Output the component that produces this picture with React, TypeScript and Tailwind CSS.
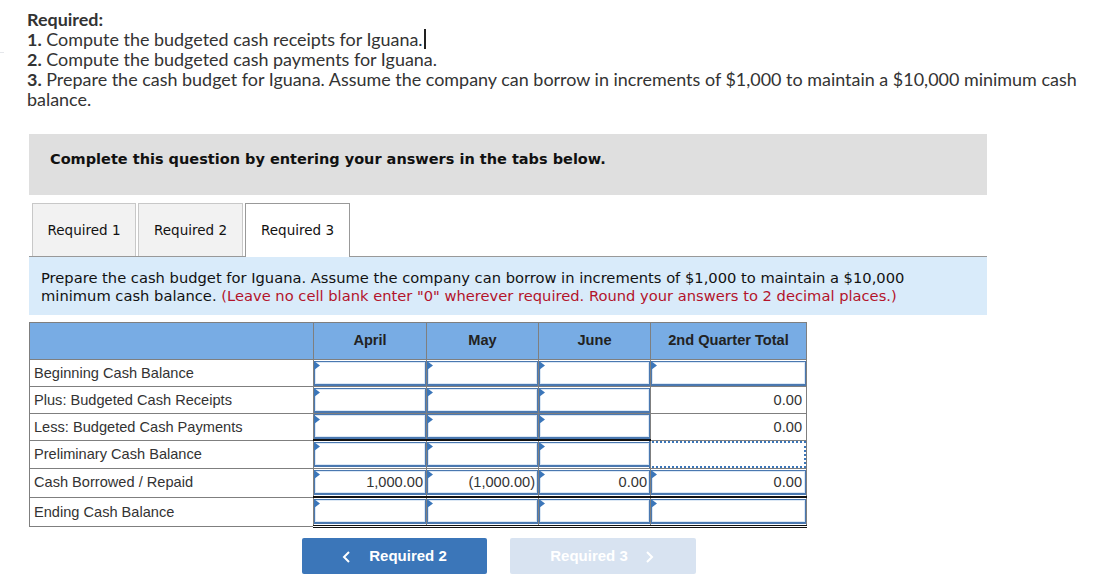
import React from "react";

const Cell = ({ v, bottom = "", dotted = false, plain = false, last = false }: { v?: string; bottom?: string; dotted?: boolean; plain?: boolean; last?: boolean }) => {
  if (plain) {
    return (
      <td className="border border-[#7f7f7f] p-0 text-right align-middle">
        <div className="pr-[4px] leading-[18px] text-[#333]">{v}</div>
      </td>
    );
  }
  if (dotted) {
    return (
      <td className="border border-[#7f7f7f] p-0">
        <div className="-ml-[2px] h-[27px] border-2 border-dotted border-[#3b76b9] bg-white" />
      </td>
    );
  }
  return (
    <td className={`relative border border-[#7f7f7f] p-0 ${bottom}`}>
      <div className={`flex h-full min-h-[25px] items-center justify-end border border-b-2 border-[#4a78b0] bg-white leading-[18px] text-[#333] shadow-[inset_0_0_0_1px_#dce8f5] ${last ? "pr-[3px]" : "pr-[2px]"}`}>
        {v}
      </div>
      <svg className="absolute left-0 top-[1px]" width="7" height="9" viewBox="0 0 7 9">
        <path d="M0 0 L6 4.5 L0 9 Z" fill="#3b76b9" />
      </svg>
    </td>
  );
};

const rows: { label: string; h: string; pad?: string; vals: (string | undefined)[]; last: "input" | "plain" | "dotted"; bottom?: string }[] = [
  { label: "Beginning Cash Balance", h: "h-[27px]", vals: [undefined, undefined, undefined, undefined], last: "input" },
  { label: "Plus: Budgeted Cash Receipts", h: "h-[27px]", vals: [undefined, undefined, undefined, "0.00"], last: "plain" },
  { label: "Less: Budgeted Cash Payments", h: "h-[26px]", vals: [undefined, undefined, undefined, "0.00"], last: "plain", bottom: "border-b-2 border-b-[#111]" },
  { label: "Preliminary Cash Balance", h: "h-[27px]", vals: [undefined, undefined, undefined, undefined], last: "dotted" },
  { label: "Cash Borrowed / Repaid", h: "h-[29px]", pad: "pb-[2px]", vals: ["1,000.00", "(1,000.00)", "0.00", "0.00"], last: "input", bottom: "border-b-2 border-b-[#111]" },
  { label: "Ending Cash Balance", h: "h-[29px]", vals: [undefined, undefined, undefined, undefined], last: "input", bottom: "border-b-[3px] border-double border-b-[#111]" },
];

export default function App() {
  return (
    <div className="relative h-[579px] w-[1100px] overflow-hidden bg-white">
      <div className="absolute left-0 top-[52px] h-px w-1 bg-gray-200" />
      <div className="pl-[27px] pr-[10px] pt-[9px] font-['Lato','Open_Sans',sans-serif] text-[17.96px] leading-[20px] text-[#333]">
        <div className="font-bold">Required:</div>
        <div>
          <b>1.</b> Compute the budgeted cash receipts for Iguana.
          <span className="ml-px inline-block h-[20px] w-[2px] bg-[#222] align-top" />
        </div>
        <div><b>2.</b> Compute the budgeted cash payments for Iguana.</div>
        <div>
          <b>3.</b> Prepare the cash budget for Iguana. Assume the company can borrow in increments of $1,000 to maintain a $10,000 minimum cash balance.
        </div>
      </div>

      <div className="ml-[29px] mt-[25px] h-[61px] w-[958px] bg-[#dfdfdf] pl-[21px] pt-[15px] font-['DejaVu_Sans',sans-serif] text-[14.5px] font-bold leading-[20px] text-[#111]">
        Complete this question by entering your answers in the tabs below.
      </div>

      <div className="ml-[29px] mt-[8px] w-[958px]">
        <div className="flex h-[54px] items-end gap-[2px] border-b border-[#999] pl-[3px] font-['DejaVu_Sans',sans-serif] text-[13.5px] text-[#111]">
          <div className="flex h-[53px] w-[104px] items-center justify-center border border-b-0 border-[#c8c8c8] bg-[#f2f2f2]">Required 1</div>
          <div className="flex h-[53px] w-[105px] items-center justify-center border border-b-0 border-[#c8c8c8] bg-[#f2f2f2]">Required 2</div>
          <div className="-mb-px flex h-[54px] w-[105px] items-center justify-center border border-b-0 border-[#999] bg-white">Required 3</div>
        </div>
        <div className="h-[58px] bg-[#d9ebfa] pl-[12px] pr-[60px] pt-[12px] font-['DejaVu_Sans',sans-serif] text-[14.7px] leading-[18px] text-[#111]">
          Prepare the cash budget for Iguana. Assume the company can borrow in increments of $1,000 to maintain a $10,000 minimum cash balance.{" "}
          <span className="text-[#b3132b]">(Leave no cell blank enter "0" wherever required. Round your answers to 2 decimal places.)</span>
        </div>
      </div>

      <table className="ml-[29px] mt-[7px] w-[777px] table-fixed border-collapse font-['Liberation_Sans',sans-serif] text-[14.6px] text-[#333]">
        <colgroup>
          <col className="w-[284px]" />
          <col className="w-[113px]" />
          <col className="w-[112px]" />
          <col className="w-[112px]" />
          <col className="w-[156px]" />
        </colgroup>
        <thead>
          <tr className="h-[37px] bg-[#78ace4] font-bold text-[#222]">
            <th className="border border-[#7f7f7f]" />
            <th className="border border-[#7f7f7f] font-bold">April</th>
            <th className="border border-[#7f7f7f] font-bold">May</th>
            <th className="border border-[#7f7f7f] font-bold">June</th>
            <th className="border border-[#7f7f7f] font-bold">2nd Quarter Total</th>
          </tr>
        </thead>
        <tbody>
          {rows.map((r) => (
            <tr key={r.label} className={r.h}>
              <td className={`border border-[#7f7f7f] pl-[4px] leading-[18px] ${r.pad ?? ""}`}>{r.label}</td>
              {r.vals.map((v, i) =>
                i === 3 && r.last === "plain" ? (
                  <Cell key={i} v={v} plain />
                ) : i === 3 && r.last === "dotted" ? (
                  <Cell key={i} dotted />
                ) : (
                  <Cell key={i} v={v} bottom={r.bottom} last={i === 3} />
                )
              )}
            </tr>
          ))}
        </tbody>
      </table>

      <div className="ml-[302px] mt-[10px] flex gap-[23px] font-['Liberation_Sans',sans-serif] text-[15px] font-bold text-white">
        <div className="flex h-[36px] w-[185px] items-center justify-center gap-[18px] rounded-[2px] bg-[#3b76b9] pt-[2px]">
          <svg width="9" height="12" viewBox="0 0 9 12" fill="none" stroke="white" strokeWidth="2"><path d="M7 1 L2 6 L7 11" /></svg>
          <span>Required 2</span>
        </div>
        <div className="flex h-[36px] w-[186px] items-center justify-center gap-[17px] rounded-[2px] bg-[#d8e3f1] pr-[2px] pt-[2px]">
          <span>Required 3</span>
          <svg width="9" height="12" viewBox="0 0 9 12" fill="none" stroke="white" strokeWidth="2"><path d="M2 1 L7 6 L2 11" /></svg>
        </div>
      </div>
    </div>
  );
}
